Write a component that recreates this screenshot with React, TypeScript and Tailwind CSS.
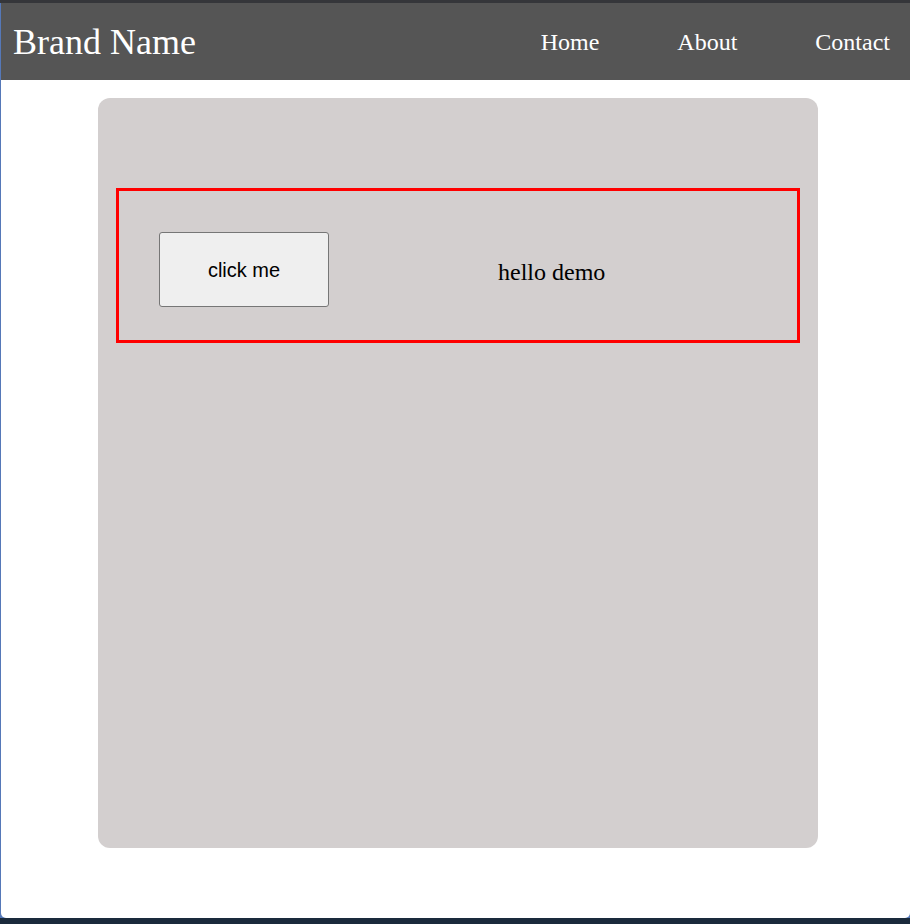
import React from 'react';

const navLinks = ['Home', 'About', 'Contact'];

function Header() {
  return (
    <header className="flex h-[77px] items-center justify-between bg-[#555555] pl-[12px] pr-[20px] text-white">
      <span className="text-[36px] leading-none font-['Liberation_Serif',serif]">Brand Name</span>
      <nav className="flex items-center gap-[78px] pt-[1px]">
        {navLinks.map((link) => (
          <a key={link} href="#" className="text-[24px] leading-none font-['Liberation_Serif',serif]">
            {link}
          </a>
        ))}
      </nav>
    </header>
  );
}

export default function App() {
  return (
    <div className="flex h-[924px] w-[910px] flex-col overflow-hidden bg-[#1a2a3c]">
      <div className="h-[3px] bg-[#35363a]" />
      <div className="flex h-[915px] bg-[#5578b8]">
        <div className="ml-[1px] flex flex-1 flex-col overflow-hidden rounded-b-[5px] bg-white">
          <Header />
          <main className="pt-[18px] pl-[97px]">
            <div className="h-[750px] w-[720px] rounded-[12px] bg-[#d3cfcf] px-[18px] pt-[90px]">
              <div className="flex h-[155px] items-center border-[3px] border-[#ff0000] pt-[8px]">
                <button className="ml-[40px] h-[75px] w-[170px] rounded-[3px] border border-[#767676] bg-[#efefef] text-[20px] text-black font-['Liberation_Sans',sans-serif]">
                  click me
                </button>
                <span className="ml-[169px] mt-[4px] text-[24px] text-black font-['Liberation_Serif',serif]">hello demo</span>
              </div>
            </div>
          </main>
        </div>
      </div>
    </div>
  );
}
